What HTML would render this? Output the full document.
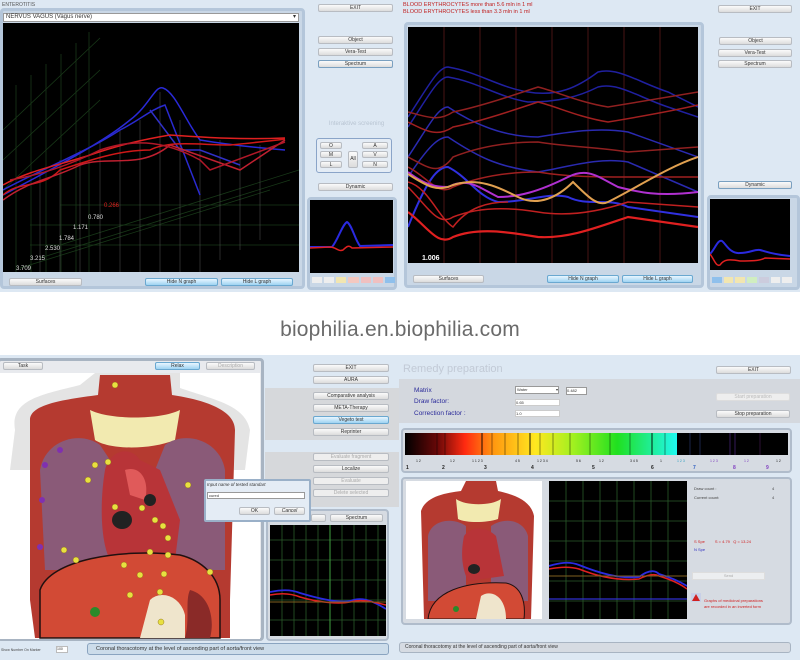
<!DOCTYPE html>
<html><head><meta charset="utf-8">
<style>
*{margin:0;padding:0;box-sizing:border-box}
body{width:800px;height:672px;background:#fff;position:relative;overflow:hidden;font-family:"Liberation Sans",sans-serif;font-size:5px;color:#333}
.a{position:absolute}
.b{position:absolute;background:linear-gradient(#fbfbfb,#dcdcdc);border:1px solid #b8bcc2;border-radius:2px;font-size:5px;text-align:center;line-height:7px;color:#333}
.h{background:linear-gradient(#e8f6ff,#9fd3f2);border-color:#6aa8d0}
.f{position:absolute;border:3px solid #b4c6da;border-radius:4px;background:#c9d7e6}
.g{position:absolute;background:#d6d8db}
.lab{position:absolute;color:#2a2a9a;font-size:6.5px}
</style></head><body>
<div class="a" style="left:0;top:0;width:400px;height:292px;background:#dde8f3"></div>
<div class="a" style="left:400px;top:0;width:400px;height:292px;background:#dde8f3"></div>
<div class="a" style="left:2px;top:2px;font-size:5px;color:#555">ENTEROTITIS</div>
<div class="f" style="left:0;top:8px;width:305px;height:281px"></div>
<div class="a" style="left:3px;top:13px;width:296px;height:9px;background:#fff;border:1px solid #999;font-size:6px;line-height:7px;padding-left:2px">NERVUS VAGUS (Vagus nerve)<span style="float:right;margin-right:2px">▾</span></div>
<svg class="a" style="left:3px;top:23px" width="296" height="249" viewBox="3 23 296 249">
<rect x="3" y="23" width="296" height="249" fill="#000"/>
<g stroke="#183818" stroke-width="0.8" fill="none">
<line x1="16" y1="85" x2="16" y2="272"/><line x1="31" y1="75" x2="31" y2="272"/><line x1="46" y1="64" x2="46" y2="272"/><line x1="61" y1="54" x2="61" y2="272"/><line x1="76" y1="43" x2="76" y2="272"/><line x1="89" y1="32" x2="89" y2="272"/>
<line x1="3" y1="130" x2="100" y2="38"/><line x1="3" y1="160" x2="100" y2="70"/><line x1="3" y1="190" x2="100" y2="100"/>
<line x1="20" y1="268" x2="270" y2="190"/><line x1="40" y1="258" x2="290" y2="180"/><line x1="60" y1="245" x2="299" y2="170"/><line x1="30" y1="225" x2="299" y2="225"/><line x1="30" y1="245" x2="299" y2="245"/><line x1="60" y1="205" x2="299" y2="205"/>
</g>
<g stroke="#555" stroke-width="0.5">
<line x1="120" y1="130" x2="120" y2="272"/><line x1="140" y1="120" x2="140" y2="272"/><line x1="160" y1="92" x2="160" y2="272"/><line x1="180" y1="120" x2="180" y2="272"/><line x1="200" y1="140" x2="200" y2="272"/><line x1="220" y1="140" x2="220" y2="260"/><line x1="240" y1="145" x2="240" y2="250"/><line x1="260" y1="145" x2="260" y2="240"/><line x1="100" y1="140" x2="100" y2="272"/><line x1="80" y1="150" x2="80" y2="272"/><line x1="60" y1="160" x2="60" y2="272"/><line x1="40" y1="170" x2="40" y2="272"/>
</g>
<g fill="none" stroke-width="1.5">
<path d="M3 195 C40 175 100 145 130 120 C150 105 155 85 163 88 C175 92 185 120 200 140 C230 145 260 148 285 150" stroke="#2a2ad8"/>
<path d="M3 190 C40 170 90 150 120 130 C140 120 150 110 165 105 L200 195" stroke="#2a2ad0"/>
<path d="M150 110 L180 150 L200 150 L240 165" stroke="#3030c8"/>
<path d="M3 185 C30 170 60 165 90 155 C120 145 140 140 170 135 C200 137 240 140 285 138" stroke="#e02020"/>
<path d="M3 195 C20 180 40 190 60 170 C90 160 120 150 150 150 C170 140 200 145 230 145 C260 142 280 140 285 139" stroke="#d01818"/>
<path d="M3 200 C30 180 50 180 80 165 C110 155 140 170 170 145 L240 170 L285 140" stroke="#c02030"/>
<path d="M10 180 C40 175 70 165 100 150 C130 140 160 138 200 160 L210 170 L285 142" stroke="#b01828"/>
</g>
<text x="104" y="207" fill="#e02020" font-size="6">0.266</text>
<g fill="#ddd" font-size="6"><text x="88" y="219">0.780</text><text x="73" y="229">1.171</text><text x="59" y="240">1.784</text><text x="45" y="250">2.530</text><text x="30" y="260">3.215</text><text x="16" y="270">3.709</text></g>
</svg>
<div class="b" style="left:9px;top:278px;width:73px;height:8px">Surfaces</div>
<div class="b h" style="left:145px;top:278px;width:73px;height:8px">Hide N graph</div>
<div class="b h" style="left:221px;top:278px;width:72px;height:8px">Hide L graph</div>
<div class="b" style="left:318px;top:4px;width:75px;height:8px">EXIT</div>
<div class="b" style="left:318px;top:36px;width:75px;height:8px">Object</div>
<div class="b" style="left:318px;top:48px;width:75px;height:8px">Vera-Test</div>
<div class="b" style="left:318px;top:60px;width:75px;height:8px;border-color:#7aa0c0">Spectrum</div>
<div class="a" style="left:318px;top:121px;width:77px;text-align:center;color:#b8c4d2;font-size:6px">Interaktive screening</div>
<div class="a" style="left:316px;top:138px;width:76px;height:35px;border:1px solid #8aa4c8;border-radius:3px;background:#e4ecf5"></div>
<div class="b" style="left:320px;top:142px;width:22px;height:7px">O</div><div class="b" style="left:320px;top:151px;width:22px;height:7px">M</div><div class="b" style="left:320px;top:161px;width:22px;height:7px">L</div>
<div class="b" style="left:348px;top:151px;width:10px;height:17px;line-height:15px">All</div>
<div class="b" style="left:362px;top:142px;width:26px;height:7px">A</div><div class="b" style="left:362px;top:151px;width:26px;height:7px">V</div><div class="b" style="left:362px;top:161px;width:26px;height:7px">N</div>
<div class="b" style="left:318px;top:183px;width:75px;height:8px">Dynamic</div>
<div class="f" style="left:307px;top:197px;width:90px;height:93px"></div>
<svg class="a" style="left:310px;top:200px" width="83" height="73" viewBox="0 0 83 73"><rect width="83" height="73" fill="#000"/>
<path d="M0 47 L22 47 C28 40 32 25 37 22 C42 25 45 40 50 46 L83 45" stroke="#2a2ae0" stroke-width="2" fill="none"/>
<path d="M0 48 L20 47 C26 47 28 52 33 50 C37 46 39 45 42 48 L83 47" stroke="#e02020" stroke-width="1.5" fill="none"/></svg>
<div class="a" style="left:312px;top:277px;width:83px;height:6px;display:flex;gap:2px"><i style="flex:1;background:#eee"></i><i style="flex:1;background:#eee"></i><i style="flex:1;background:#f2e6b0"></i><i style="flex:1;background:#f4c8c0"></i><i style="flex:1;background:#f0c0c0"></i><i style="flex:1;background:#f0c0c0"></i><i style="flex:1;background:#8fc0ec"></i></div>

<div class="a" style="left:403px;top:2px;color:#c02020;font-size:5.5px;line-height:6.5px">BLOOD ERYTHROCYTES more than 5.6 mln in 1 ml<br>BLOOD ERYTHROCYTES less than 3.3 mln in 1 ml</div>
<div class="f" style="left:404px;top:22px;width:300px;height:266px"></div>
<svg class="a" style="left:408px;top:27px" width="290" height="236" viewBox="0 0 290 236"><rect width="290" height="236" fill="#000"/>
<g stroke="#5a1818" stroke-width="0.8"><line x1="36" y1="0" x2="36" y2="236"/><line x1="72" y1="0" x2="72" y2="236"/><line x1="108" y1="0" x2="108" y2="236"/><line x1="144" y1="0" x2="144" y2="236"/><line x1="180" y1="0" x2="180" y2="236"/><line x1="216" y1="0" x2="216" y2="236"/><line x1="252" y1="0" x2="252" y2="236"/></g>
<g fill="none" stroke-width="1.5">
<path d="M0 90 C20 60 30 40 40 40 C70 45 90 60 120 65 C150 70 170 60 190 45 C210 40 230 55 260 65 L290 80" stroke="#2020a0"/>
<path d="M0 100 C20 70 30 50 40 50 C70 55 90 70 120 75 C150 75 170 70 190 60 C210 55 230 70 260 80 L290 90" stroke="#2020a0"/>
<path d="M0 130 C20 100 30 80 40 80 C70 100 100 110 130 110 C160 105 190 100 220 105 L290 130" stroke="#2a2ab0"/>
<path d="M0 150 C20 120 30 110 40 110 C70 130 90 140 130 145 C160 140 190 130 220 135 L290 165" stroke="#2a2ab0"/>
<path d="M0 200 C20 150 30 140 40 140 C60 150 70 170 90 175 C120 175 140 165 160 170 C180 180 200 170 220 180 L290 190" stroke="#3030e0" stroke-width="2"/>
<path d="M0 85 C20 90 30 95 45 85 C70 80 100 70 130 60 C150 65 170 75 200 80 C230 75 260 70 290 65" stroke="#902020"/>
<path d="M0 95 C20 105 30 110 45 100 C70 95 100 85 130 75 C150 80 170 90 200 95 C230 90 260 85 290 78" stroke="#a02020"/>
<path d="M0 130 C20 140 30 150 45 130 C70 120 100 115 130 115 C160 120 190 120 220 125 L290 120" stroke="#902020"/>
<path d="M0 140 C20 150 30 170 45 160 C70 150 100 145 130 145 C160 150 190 150 220 150 L290 150" stroke="#a02020"/>
<path d="M0 160 C20 180 30 200 45 190 C70 180 100 180 130 185 C160 190 190 185 220 175 L290 180" stroke="#c02020"/>
<path d="M0 185 C20 200 30 220 45 210 C70 200 100 205 130 210 C160 212 190 200 220 190 L290 200" stroke="#e02020" stroke-width="2.2"/>
<path d="M0 155 C20 160 30 190 45 200 C60 180 80 175 100 175" stroke="#c02020"/>
<path d="M0 145 C20 160 30 160 40 160 C60 150 70 160 90 170 C110 170 130 165 160 150 C180 140 190 150 210 160 C230 165 250 170 290 165" stroke="#b030d0" stroke-width="2"/>
<path d="M0 147 C20 160 30 165 45 158 C70 150 90 160 110 170 C130 180 150 170 165 155 C180 170 190 180 200 175 C230 160 260 140 290 130" stroke="#e0a050" stroke-width="2"/>
</g>
<text x="14" y="233" fill="#fff" font-size="7" font-weight="bold">1.006</text></svg>
<div class="b" style="left:413px;top:275px;width:71px;height:8px">Surfaces</div>
<div class="b h" style="left:547px;top:275px;width:72px;height:8px">Hide N graph</div>
<div class="b h" style="left:622px;top:275px;width:71px;height:8px">Hide L graph</div>
<div class="b" style="left:718px;top:5px;width:74px;height:8px">EXIT</div>
<div class="b" style="left:719px;top:37px;width:73px;height:8px">Object</div>
<div class="b" style="left:718px;top:49px;width:74px;height:8px">Vera-Test</div>
<div class="b" style="left:718px;top:60px;width:74px;height:8px">Spectrum</div>
<div class="b" style="left:718px;top:181px;width:74px;height:8px;border-color:#7aa0c0">Dynamic</div>
<div class="f" style="left:707px;top:195px;width:93px;height:95px"></div>
<svg class="a" style="left:710px;top:199px" width="80" height="71" viewBox="0 0 80 71"><rect width="80" height="71" fill="#000"/>
<path d="M0 55 C5 50 8 40 12 42 C16 45 20 55 30 54 C40 54 45 50 50 51 C55 52 60 55 80 57" stroke="#2a2ae0" stroke-width="2" fill="none"/>
<path d="M0 55 C4 60 6 68 10 66 C14 60 20 60 30 62 C40 62 50 62 55 59 L80 60" stroke="#e02020" stroke-width="1.5" fill="none"/></svg>
<div class="a" style="left:712px;top:277px;width:80px;height:6px;display:flex;gap:2px"><i style="flex:1;background:#8fc0ec"></i><i style="flex:1;background:#f2e6b0"></i><i style="flex:1;background:#f2e6b0"></i><i style="flex:1;background:#d0eec0"></i><i style="flex:1;background:#ccd"></i><i style="flex:1;background:#eee"></i><i style="flex:1;background:#eee"></i></div>

<div class="a" style="left:0;top:318px;width:800px;text-align:center;font-size:21px;color:#6a6a6a;letter-spacing:0.2px">biophilia.en.biophilia.com</div>

<div class="a" style="left:0;top:355px;width:400px;height:305px;background:#dde8f3"></div>
<div class="f" style="left:-3px;top:358px;width:267px;height:283px;border-color:#a8b4c2;background:#e8eaee"></div>
<div class="b" style="left:3px;top:362px;width:40px;height:8px">Task</div>
<div class="b h" style="left:155px;top:362px;width:45px;height:8px">Relax</div>
<div class="b" style="left:206px;top:362px;width:49px;height:8px;color:#aaa">Description</div>
<svg class="a" style="left:0;top:373px" width="260" height="266" viewBox="0 373 260 266">
<rect x="0" y="373" width="260" height="266" fill="#fff"/>
<path d="M15 430 C10 400 40 395 80 385 L95 373 L180 373 L180 388 C215 400 245 405 250 430 L245 470 L10 470 Z" fill="#e4e4e4"/>
<path d="M30 420 C30 405 60 400 98 395 L100 375 L170 375 L172 395 C205 400 235 410 235 430 L230 600 L230 638 L35 638 L30 600 Z" fill="#b53a30"/>
<path d="M90 410 C110 420 160 420 180 410 L175 440 C150 450 110 450 95 440 Z" fill="#f2eab0"/>
<path d="M40 470 C45 440 80 430 100 445 L110 460 L115 470 L110 570 L45 570 Z" fill="#8a5a78"/>
<path d="M225 470 C220 440 185 430 165 445 L155 470 L160 570 L225 570 Z" fill="#8a5a78"/>
<path d="M105 470 C110 450 130 445 140 460 L160 470 L180 520 L175 560 L110 560 C100 540 100 500 105 470 Z" fill="#b83438"/>
<path d="M125 470 C140 465 150 480 145 500 L130 495 Z" fill="#e05a5a"/>
<ellipse cx="122" cy="520" rx="10" ry="9" fill="#222"/><ellipse cx="150" cy="500" rx="6" ry="6" fill="#222"/>
<path d="M40 590 C50 560 120 548 180 555 C200 560 220 575 220 600 L220 638 L40 638 Z" fill="#d24a35" stroke="#201010" stroke-width="1.5"/>
<path d="M150 600 C160 590 180 595 185 615 L185 638 L140 638 Z" fill="#efe5cc"/>
<path d="M190 590 C210 595 215 620 210 638 L185 638 C190 620 185 600 190 590Z" fill="#8a2a28"/>
<circle cx="95" cy="612" r="5" fill="#2a8a2a"/>
<g fill="#e8e040" stroke="#806010" stroke-width="0.4"><circle cx="115" cy="385" r="3"/><circle cx="95" cy="465" r="3"/><circle cx="88" cy="480" r="3"/><circle cx="108" cy="462" r="3"/><circle cx="115" cy="507" r="3"/><circle cx="155" cy="520" r="3"/><circle cx="163" cy="526" r="3"/><circle cx="168" cy="538" r="3"/><circle cx="150" cy="552" r="3"/><circle cx="168" cy="555" r="3"/><circle cx="76" cy="560" r="3"/><circle cx="124" cy="565" r="3"/><circle cx="140" cy="575" r="3"/><circle cx="164" cy="574" r="3"/><circle cx="130" cy="595" r="3"/><circle cx="160" cy="592" r="3"/><circle cx="161" cy="622" r="3"/><circle cx="188" cy="485" r="3"/><circle cx="210" cy="572" r="3"/><circle cx="64" cy="550" r="3"/><circle cx="142" cy="508" r="3"/></g>
<g fill="#8030b0"><circle cx="60" cy="450" r="3"/><circle cx="45" cy="465" r="3"/><circle cx="42" cy="500" r="3"/><circle cx="40" cy="547" r="3"/></g>
</svg>
<div class="b" style="left:313px;top:364px;width:76px;height:8px">EXIT</div>
<div class="b" style="left:313px;top:376px;width:76px;height:8px">AURA</div>
<div class="g" style="left:265px;top:388px;width:135px;height:52px"></div>
<div class="b" style="left:313px;top:392px;width:76px;height:8px">Comparative analysis</div>
<div class="b" style="left:313px;top:404px;width:76px;height:8px">META-Therapy</div>
<div class="b h" style="left:313px;top:416px;width:76px;height:8px">Vegeto test</div>
<div class="b" style="left:313px;top:428px;width:76px;height:8px">Reprinter</div>
<div class="g" style="left:265px;top:452px;width:135px;height:55px"></div>
<div class="b" style="left:313px;top:453px;width:76px;height:8px;color:#aaa;background:#eee">Evaluate fragment</div>
<div class="b" style="left:313px;top:465px;width:76px;height:8px">Localize</div>
<div class="b" style="left:313px;top:477px;width:76px;height:8px;color:#aaa;background:#eee">Evaluate</div>
<div class="b" style="left:313px;top:489px;width:76px;height:8px;color:#aaa;background:#eee">Delete selected</div>
<div class="f" style="left:266px;top:509px;width:123px;height:132px;border-width:2px;border-color:#b0bccb;background:#d6dbe2"></div>
<div class="b" style="left:311px;top:514px;width:15px;height:8px"></div>
<div class="b" style="left:330px;top:514px;width:53px;height:8px">Spectrum</div>
<svg class="a" style="left:270px;top:525px" width="116" height="111" viewBox="0 0 116 111"><rect width="116" height="111" fill="#000"/>
<g stroke="#2a5a2a" stroke-width="0.8"><line x1="12" y1="0" x2="12" y2="111"/><line x1="24" y1="0" x2="24" y2="111"/><line x1="36" y1="0" x2="36" y2="111"/><line x1="48" y1="0" x2="48" y2="111"/><line x1="60" y1="0" x2="60" y2="111"/><line x1="72" y1="0" x2="72" y2="111"/><line x1="84" y1="0" x2="84" y2="111"/><line x1="96" y1="0" x2="96" y2="111"/><line x1="108" y1="0" x2="108" y2="111"/><line x1="0" y1="15" x2="116" y2="15"/><line x1="0" y1="35" x2="116" y2="35"/><line x1="0" y1="55" x2="116" y2="55"/><line x1="0" y1="75" x2="116" y2="75"/><line x1="0" y1="95" x2="116" y2="95"/></g>
<line x1="60" y1="0" x2="60" y2="111" stroke="#40a040"/>
<path d="M0 67 C10 65 20 64 30 68 C50 74 70 78 80 76 C90 72 100 74 116 84" stroke="#2a2ae0" stroke-width="1.8" fill="none"/>
<path d="M0 70 C10 68 20 68 30 72 C50 78 70 79 80 77 C90 74 100 76 116 80" stroke="#e02020" stroke-width="1.5" fill="none"/>
<line x1="0" y1="77" x2="116" y2="77" stroke="#806020"/></svg>
<div class="a" style="left:1px;top:648px;font-size:3.5px;color:#444">Show Number On Marker</div>
<div class="a" style="left:56px;top:646px;width:12px;height:7px;background:#fff;border:1px solid #bbb;font-size:3.5px">100</div>
<div class="a" style="left:87px;top:643px;width:302px;height:12px;border:1px solid #8aa4c0;border-radius:3px;background:#ccdcea;font-size:5.5px;line-height:10px;padding-left:8px;color:#333">Coronal thoracotomy at the level of ascending part of aorta/front view</div>

<!-- dialog on top -->
<div class="a" style="left:204px;top:479px;width:107px;height:43px;background:#e4ecf5;border:2px solid #9ab0c8;border-radius:2px"></div>
<div class="a" style="left:207px;top:482px;font-size:4.5px;font-style:italic;color:#333">Input name of tested standart</div>
<div class="a" style="left:207px;top:492px;width:98px;height:7px;background:#fff;border:1px solid #999;font-size:4px;padding-left:1px">cured</div>
<div class="b" style="left:239px;top:507px;width:31px;height:8px">OK</div>
<div class="b" style="left:274px;top:507px;width:31px;height:8px;font-style:italic">Cancel</div>

<div class="a" style="left:399px;top:355px;width:401px;height:305px;background:#dde8f3"></div>
<div class="a" style="left:403px;top:363px;font-size:11px;color:#c2cad6">Remedy preparation</div>
<div class="b" style="left:716px;top:366px;width:75px;height:8px">EXIT</div>
<div class="g" style="left:399px;top:379px;width:401px;height:44px;background:#d4d8de"></div>
<div class="lab" style="left:414px;top:387px">Matrix</div>
<div class="lab" style="left:414px;top:398px">Draw factor:</div>
<div class="lab" style="left:414px;top:410px">Correction factor :</div>
<div class="a" style="left:515px;top:386px;width:44px;height:8px;background:#fff;border:1px solid #999;font-size:4px;padding-left:1px">Water<span style="float:right">▾</span></div>
<div class="a" style="left:566px;top:387px;width:21px;height:8px;background:#fff;border:1px solid #999;font-size:4px">0.482</div>
<div class="a" style="left:515px;top:399px;width:45px;height:7px;background:#fff;border:1px solid #ccc;font-size:4px">0.65</div>
<div class="a" style="left:515px;top:410px;width:45px;height:7px;background:#fff;border:1px solid #ccc;font-size:4px">1.0</div>
<div class="b" style="left:716px;top:393px;width:74px;height:8px;color:#bbb;background:#eee;border-color:#ddd">Start preparation</div>
<div class="b" style="left:716px;top:410px;width:74px;height:8px">Stop preparation</div>
<div class="a" style="left:401px;top:428px;width:391px;height:45px;background:#d6dbe2;border:2px solid #b0bccb;border-radius:4px"></div>
<svg class="a" style="left:405px;top:433px" width="384" height="37" viewBox="405 433 384 37">
<defs><linearGradient id="sp" x1="405" x2="677" gradientUnits="userSpaceOnUse"><stop offset="0" stop-color="#000"/><stop offset="0.12" stop-color="#6a0808"/><stop offset="0.22" stop-color="#ff2a10"/><stop offset="0.33" stop-color="#ff9a10"/><stop offset="0.48" stop-color="#ffe820"/><stop offset="0.62" stop-color="#a0f020"/><stop offset="0.78" stop-color="#20e020"/><stop offset="1" stop-color="#20f8f0"/></linearGradient></defs>
<rect x="405" y="433" width="272" height="22" fill="url(#sp)"/><rect x="677" y="433" width="111" height="22" fill="#000"/>
<g stroke="#000" stroke-width="0.7" opacity="0.6"><line x1="437" y1="433" x2="437" y2="455"/><line x1="445" y1="433" x2="445" y2="455"/><line x1="482" y1="433" x2="482" y2="455" stroke-width="1.5"/><line x1="492" y1="433" x2="492" y2="455"/><line x1="505" y1="433" x2="505" y2="455"/><line x1="518" y1="433" x2="518" y2="455"/><line x1="530" y1="433" x2="530" y2="455" stroke-width="1.5"/><line x1="540" y1="433" x2="540" y2="455"/><line x1="553" y1="433" x2="553" y2="455"/><line x1="570" y1="433" x2="570" y2="455"/><line x1="590" y1="433" x2="590" y2="455"/><line x1="610" y1="433" x2="610" y2="455"/><line x1="630" y1="433" x2="630" y2="455"/><line x1="652" y1="433" x2="652" y2="455" stroke-width="1.5"/><line x1="665" y1="433" x2="665" y2="455"/></g>
<g stroke-width="0.8" opacity="0.7"><line x1="690" y1="433" x2="690" y2="455" stroke="#304080"/><line x1="700" y1="433" x2="700" y2="455" stroke="#304080"/><line x1="730" y1="433" x2="730" y2="455" stroke="#6030a0"/><line x1="735" y1="433" x2="735" y2="455" stroke="#6030a0"/><line x1="760" y1="433" x2="760" y2="455" stroke="#502060"/></g>
<g font-size="5" fill="#222" font-weight="bold"><text x="406" y="469">1</text><text x="442" y="469">2</text><text x="484" y="469">3</text><text x="531" y="469">4</text><text x="592" y="469">5</text><text x="651" y="469">6</text><text x="693" y="469" fill="#3060c0">7</text><text x="733" y="469" fill="#8040c0">8</text><text x="766" y="469" fill="#8040c0">9</text></g>
<g font-size="3.5" fill="#222"><text x="416" y="462">1 2</text><text x="450" y="462">1 2</text><text x="472" y="462">1 1 2 3</text><text x="515" y="462">4 5</text><text x="537" y="462">1 2 3 4</text><text x="576" y="462">5 6</text><text x="599" y="462">1 2</text><text x="630" y="462">3 4 5</text><text x="660" y="462">1</text><text x="677" y="462" fill="#30a0c0">1 2 3</text><text x="710" y="462" fill="#8040c0">1 2 3</text><text x="744" y="462" fill="#8040c0">1 2</text><text x="776" y="462">1 2</text></g>
</svg>
<div class="a" style="left:401px;top:477px;width:391px;height:148px;background:#d6dbe2;border:2px solid #b0bccb;border-radius:4px"></div>
<svg class="a" style="left:406px;top:481px" width="136" height="138" viewBox="0 0 136 138">
<rect width="136" height="138" fill="#fff"/>
<path d="M15 30 C20 15 40 12 55 10 L60 0 L90 0 L92 10 C110 14 125 20 128 35 L125 138 L18 138 Z" fill="#b53a30"/>
<path d="M50 18 C60 25 85 25 95 18 L92 38 C80 42 60 42 52 38Z" fill="#f2eab0"/>
<path d="M22 55 C25 40 45 35 60 45 L60 120 L22 120 Z" fill="#8a5a78"/>
<path d="M122 55 C118 40 100 35 85 45 L85 120 L122 120 Z" fill="#8a5a78"/>
<path d="M58 55 C65 45 80 45 90 55 L98 95 L62 100 C55 85 55 70 58 55Z" fill="#b83438"/>
<ellipse cx="68" cy="88" rx="6" ry="5" fill="#222"/>
<path d="M22 138 C25 110 60 100 100 102 C115 105 120 120 118 138Z" fill="#d24a35" stroke="#201010"/>
<path d="M75 115 C85 108 100 115 100 138 L70 138Z" fill="#efe5cc"/>
<circle cx="50" cy="128" r="3" fill="#2a8a2a"/>
</svg>
<svg class="a" style="left:549px;top:481px" width="138" height="138" viewBox="0 0 138 138"><rect width="138" height="138" fill="#000"/>
<g stroke="#2a5a2a" stroke-width="0.8"><line x1="17" y1="0" x2="17" y2="138"/><line x1="34" y1="0" x2="34" y2="138"/><line x1="51" y1="0" x2="51" y2="138"/><line x1="68" y1="0" x2="68" y2="138"/><line x1="85" y1="0" x2="85" y2="138"/><line x1="102" y1="0" x2="102" y2="138"/><line x1="119" y1="0" x2="119" y2="138"/><line x1="0" y1="20" x2="138" y2="20"/><line x1="0" y1="40" x2="138" y2="40"/><line x1="0" y1="60" x2="138" y2="60"/><line x1="0" y1="80" x2="138" y2="80"/><line x1="0" y1="100" x2="138" y2="100"/><line x1="0" y1="120" x2="138" y2="120"/></g>
<line x1="0" y1="118" x2="138" y2="118" stroke="#3030d0" stroke-width="1.2"/>
<path d="M0 85 C10 82 20 80 30 84 C50 92 70 98 90 96 C98 90 105 88 110 93 C120 96 130 100 138 105" stroke="#2a2ae0" stroke-width="1.8" fill="none"/>
<path d="M0 88 C10 86 20 85 30 88 C50 96 70 100 90 98 C98 94 105 92 110 95 C120 98 130 102 138 108" stroke="#e02020" stroke-width="1.5" fill="none"/>
<line x1="0" y1="95" x2="138" y2="95" stroke="#806020"/></svg>
<div class="a" style="left:694px;top:484px;font-size:4px;color:#444;line-height:9px">Draw count :<br>Current count:</div>
<div class="a" style="left:772px;top:484px;font-size:4px;color:#444;line-height:9px">4<br>4</div>
<div class="a" style="left:694px;top:538px;font-size:4px;color:#d02020;line-height:8px">S Spe&nbsp;&nbsp;&nbsp;&nbsp;&nbsp;&nbsp;&nbsp;&nbsp;&nbsp;S = 4.79&nbsp;&nbsp;&nbsp;Q = 13.24<br><span style="color:#3030c0">N Spe</span></div>
<div class="a" style="left:692px;top:572px;width:73px;height:8px;background:#eceef0;border:1px solid #ddd;font-size:4px;text-align:center;color:#aaa;line-height:6px">Send</div>
<div class="a" style="left:691px;top:593px;width:10px;height:9px;background:#c8d0e8"><svg width="10" height="9"><path d="M5 1 L9 8 L1 8Z" fill="#d02020"/></svg></div>
<div class="a" style="left:704px;top:598px;font-size:4px;color:#d02020;line-height:6px">Graphs of medicinal preparations<br>are recorded in an inverted form</div>
<div class="a" style="left:399px;top:642px;width:392px;height:11px;border:1px solid #a8b4c2;border-radius:3px;background:#d6dbe2;font-size:5px;line-height:9px;padding-left:5px;color:#333">Coronal thoracotomy at the level of ascending part of aorta/front view</div>
</body></html>
